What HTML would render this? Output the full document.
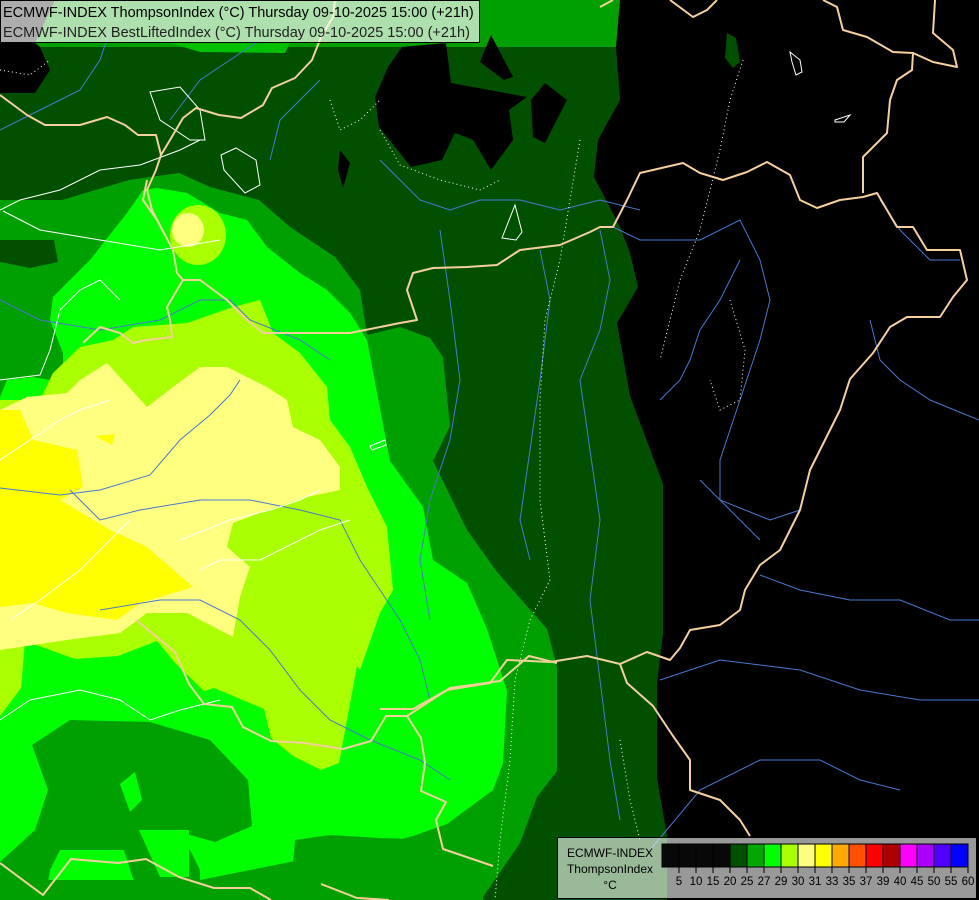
<!DOCTYPE html>
<html><head><meta charset="utf-8"><style>
html,body{margin:0;padding:0;background:#000;}
svg{display:block;}
text{font-family:"Liberation Sans",sans-serif;}
</style></head><body>
<svg width="979" height="900" viewBox="0 0 979 900" xmlns="http://www.w3.org/2000/svg">
<rect width="979" height="900" fill="#005000"/>
<polygon fill="#00a000" points="0,0 620,0 616,47 0,47"/>
<polygon fill="#00c000" points="170,43 290,43 285,53 200,52"/>
<polygon fill="#000" points="620,0 979,0 979,900 667,900 667,836 657,778 657,683 663,633 663,484 630,396 617,323 638,287 630,253 620,227 594,177 598,140 620,100 616,47"/>
<polygon fill="#005000" points="727,33 736,38 740,62 733,68 725,58"/>
<polygon fill="#000" points="0,0 55,0 35,43 40,47 50,70 35,93 0,93"/>
<polygon fill="#000" points="402,47 446,43 451,83 527,97 509,110 513,140 491,170 473,140 455,133 442,160 411,167 379,127 375,97 388,67"/>
<polygon fill="#000" points="491,35 513,77 504,80 480,62"/>
<polygon fill="#000" points="545,83 567,100 545,143 533,137 531,100"/>
<polygon fill="#000" points="340,150 350,163 343,188 338,170"/>
<polygon fill="#00a000" points="0,200 62,200 129,180 179,173 210,187 259,200 290,227 335,257 360,290 367,335 400,327 430,338 443,357 450,426 433,461 467,530 497,572 547,629 557,667 557,771 537,797 520,843 483,897 483,900 0,900"/>
<polygon fill="#005000" points="0,240 54,240 58,262 30,268 0,262"/>
<polygon fill="#00ff00" points="0,397 7,380 33,377 50,380 63,377 63,353 50,320 53,297 90,260 127,213 143,190 157,188 187,193 220,213 247,220 267,247 300,273 327,290 350,313 367,340 390,461 423,507 433,560 467,583 487,629 507,691 503,763 493,790 447,824 413,836 360,850 300,860 200,880 0,880"/>
<polygon fill="#00a000" points="32,745 70,720 150,722 210,740 248,780 252,826 215,842 190,835 140,838 130,850 60,850 50,870 45,900 0,900 0,862 35,830 48,790"/>
<polygon fill="#00a000" points="120,838 142,832 185,840 200,870 200,900 140,900"/>
<polygon fill="#00ff00" points="139,830 189,830 189,877 160,877"/>
<polygon fill="#00ff00" points="120,784 135,772 142,800 130,812"/>
<polygon fill="#00a000" points="290,900 295,840 330,835 380,838 440,840 470,822 490,815 483,900"/>
<polygon fill="#00a000" points="0,480 18,470 0,500"/>
<polygon fill="#aaff00" points="0,400 40,400 53,373 80,347 113,340 133,327 187,323 233,307 260,300 273,333 300,353 327,387 330,420 350,447 367,487 387,527 393,590 380,613 360,670 357,666 339,763 321,770 293,756 271,738 264,709 214,688 204,691 175,663 157,641 118,656 75,659 25,641 21,688 0,716"/>
<ellipse cx="198" cy="235" rx="28" ry="30" fill="#aaff00"/>
<ellipse cx="188" cy="230" rx="16" ry="17" fill="#ffff80"/>
<polygon fill="#ffff80" points="0,410 27,397 67,393 80,380 107,363 147,407 173,387 200,367 227,367 267,387 287,400 293,427 320,440 340,467 340,490 307,497 267,510 233,523 227,547 250,567 240,597 233,637 187,613 147,613 120,633 67,640 0,650"/>
<polygon fill="#ffff00" points="0,410 20,410 33,440 77,450 83,487 60,500 110,530 147,547 193,587 140,603 117,620 67,613 33,603 0,607"/>
<polygon fill="#ffff00" points="95,436 115,434 112,445"/>
<g fill="none" stroke="#4a78d0" stroke-width="1">
<polyline points="0,300 40,320 100,330 160,320 200,300 230,300 250,320 300,340 330,360"/>
<polyline points="0,488 60,495 100,490 150,475 180,440 210,415 230,395 240,380"/>
<polyline points="70,490 100,520 140,510 200,500 250,500 300,510 340,520 360,560 380,590 400,620 420,660 430,700"/>
<polyline points="100,610 160,600 200,600 240,620 270,650 300,690 330,720 370,740 420,760 450,780"/>
<polyline points="380,160 400,180 420,200 450,210 480,200 520,200 560,210 600,200 640,210"/>
<polyline points="440,230 450,300 460,380 450,440 430,500 420,560 430,620"/>
<polyline points="540,250 550,300 540,380 530,450 520,520 530,560"/>
<polyline points="600,230 610,280 600,330 580,380 590,450 600,520 590,600 600,680 610,760 620,820"/>
<polyline points="613,227 640,240 700,240 740,220 760,260 770,300 760,340 740,400 720,460 720,500 740,520 760,540"/>
<polyline points="660,400 680,380 690,360 700,330 720,300 740,260"/>
<polyline points="700,480 720,500 770,520 800,510"/>
<polyline points="760,575 800,590 850,600 900,600 950,620 979,620"/>
<polyline points="650,850 700,790 760,760 820,760 860,780 900,790"/>
<polyline points="660,680 720,660 800,670 860,690 920,700 979,700"/>
<polyline points="870,320 880,360 900,380 930,400 979,420"/>
<polyline points="880,200 900,230 930,260 960,260"/>
<polyline points="0,130 40,110 80,90 100,60 110,30"/>
<polyline points="170,120 200,80 230,60 260,40"/>
<polyline points="270,160 280,120 300,100 320,80"/>
</g>
<g fill="none" stroke="#fff" stroke-width="1">
<polyline points="0,210 20,200 60,190 100,170 140,165 180,150 200,140"/>
<polyline points="3,211 40,230 100,240 160,250 220,240"/>
<polygon points="150,92 180,87 200,110 205,140 190,140 160,120"/>
<polygon points="221,155 236,148 256,160 260,185 245,193 224,170"/>
<polyline points="0,380 40,375 50,350 60,310 80,290 100,280 120,300"/>
<polyline points="0,460 30,440 60,420 80,410 110,400"/>
<polyline points="10,620 40,600 80,570 110,540 130,520"/>
<polyline points="0,720 30,700 80,690 120,700 150,720 180,710 220,700"/>
<polyline points="180,540 230,520 270,510 300,500 320,490"/>
<polyline points="200,570 220,560 260,560 300,540 320,530 350,520"/>
<polygon points="502,238 515,205 522,232 516,240"/>
<polygon points="790,52 800,60 802,72 796,75 792,62"/>
<polygon points="835,120 850,115 844,122 835,122"/>
<polygon points="370,446 385,440 386,445 372,450"/>
</g>
<g fill="none" stroke="#fff" stroke-width="1" stroke-dasharray="1,3">
<polyline points="580,140 570,200 560,260 545,320 540,400 540,500 550,580 530,620 515,680 510,760 500,840 495,900"/>
<polyline points="330,100 340,130 360,120 380,100"/>
<polyline points="380,130 400,165 440,180 480,190 500,180"/>
<polyline points="743,60 730,100 720,150 700,230 680,280 660,360"/>
<polyline points="730,300 745,350 740,400 720,410 710,380"/>
<polyline points="620,740 630,800 640,840"/>
<polyline points="0,70 30,75 50,60"/>
</g>
<g fill="none" stroke="#f5cf9c" stroke-width="2" stroke-linejoin="round">
<polyline points="0,95 27,115 45,125 80,125 107,117 125,125 138,135 156,135 161,155 156,170 147,190 152,210 165,235"/>
<polyline points="161,155 170,140 183,118 196,108 219,115 241,118 263,105 272,88 295,78 312,60 321,37 333,17 335,0"/>
<polyline points="147,180 143,200 157,220 173,250 177,273 183,280 177,290 167,307 170,320 172,337 147,340 133,343 120,333 100,327 83,343"/>
<polyline points="183,280 200,280 227,300 247,320 263,333 300,333 350,333 400,323 417,320 407,290 413,273 433,268 467,267 497,265 520,250 560,245 590,232 600,227 613,227 627,200 640,173 683,163 700,173 723,180 747,172 767,162 790,175 800,200 817,208 840,200 863,197 877,193 887,210 897,227 913,227 927,250 960,250 967,280 953,297 940,317 907,317 890,327 873,353 850,379 840,410 825,440 810,470 800,510 780,550 760,565 745,590 740,610 720,625 690,630 680,648 670,660 647,652 620,664 587,656 550,662 507,660 490,683 447,690 413,709 380,709"/>
<polyline points="863,193 863,157 887,133 890,100 897,80 912,70 913,53 933,62 957,67 953,50 933,33 935,0"/>
<polyline points="913,53 893,52 867,37 843,30 837,7 823,0"/>
<polyline points="670,0 693,17 707,10 717,0"/>
<polyline points="600,7 613,0"/>
<polyline points="620,664 627,683 653,706 673,736 690,760 690,790 720,800 740,820 750,836"/>
<polyline points="136,620 175,652 189,684 204,704 232,707 243,727 271,741 304,743 343,749 371,741 386,716 407,716 421,738 425,763 421,791 446,802 436,820 443,849 493,866"/>
<polyline points="407,716 450,688 500,681 529,656 557,663"/>
<polyline points="0,863 43,895 71,859 118,863 146,859 179,877 214,888 250,888 271,900"/>
<polyline points="321,884 357,898 389,900"/>
</g>
<rect x="0.5" y="0.5" width="479" height="42" fill="#fff" fill-opacity="0.68" stroke="#000" stroke-width="1"/>
<text x="3" y="17" font-size="14.5" fill="#000">ECMWF-INDEX ThompsonIndex (°C) Thursday 09-10-2025 15:00 (+21h)</text>
<text x="3" y="37" font-size="14.5" fill="#222">ECMWF-INDEX BestLiftedIndex (°C) Thursday 09-10-2025 15:00 (+21h)</text>
<rect x="557.5" y="837.5" width="419" height="61" fill="#fff" fill-opacity="0.6" stroke="#000" stroke-width="1"/>
<text x="610" y="857" font-size="12" text-anchor="middle" fill="#000">ECMWF-INDEX</text>
<text x="610" y="873" font-size="12" text-anchor="middle" fill="#000">ThompsonIndex</text>
<text x="610" y="889" font-size="12" text-anchor="middle" fill="#000">°C</text>
<g stroke="#000" stroke-width="1">
<rect x="662" y="844" width="17" height="23" fill="#080808"/>
<rect x="679" y="844" width="17" height="23" fill="#080808"/>
<rect x="696" y="844" width="17" height="23" fill="#080808"/>
<rect x="713" y="844" width="17" height="23" fill="#080808"/>
<rect x="730" y="844" width="17" height="23" fill="#005000"/>
<rect x="747" y="844" width="17" height="23" fill="#00a800"/>
<rect x="764" y="844" width="17" height="23" fill="#00ff00"/>
<rect x="781" y="844" width="17" height="23" fill="#aaff00"/>
<rect x="798" y="844" width="17" height="23" fill="#ffff80"/>
<rect x="815" y="844" width="17" height="23" fill="#ffff00"/>
<rect x="832" y="844" width="17" height="23" fill="#ffaa00"/>
<rect x="849" y="844" width="17" height="23" fill="#ff5000"/>
<rect x="866" y="844" width="17" height="23" fill="#ff0000"/>
<rect x="883" y="844" width="17" height="23" fill="#aa0000"/>
<rect x="900" y="844" width="17" height="23" fill="#ff00ff"/>
<rect x="917" y="844" width="17" height="23" fill="#aa00ff"/>
<rect x="934" y="844" width="17" height="23" fill="#5000ff"/>
<rect x="951" y="844" width="17" height="23" fill="#0000ff"/>
<path d="M679 867v6M696 867v6M713 867v6M730 867v6M747 867v6M764 867v6M781 867v6M798 867v6M815 867v6M832 867v6M849 867v6M866 867v6M883 867v6M900 867v6M917 867v6M934 867v6M951 867v6M968 867v6"/>
</g>
<g font-size="11.5" text-anchor="middle" fill="#000">
<text x="679" y="885">5</text><text x="696" y="885">10</text><text x="713" y="885">15</text><text x="730" y="885">20</text><text x="747" y="885">25</text><text x="764" y="885">27</text><text x="781" y="885">29</text><text x="798" y="885">30</text><text x="815" y="885">31</text><text x="832" y="885">33</text><text x="849" y="885">35</text><text x="866" y="885">37</text><text x="883" y="885">39</text><text x="900" y="885">40</text><text x="917" y="885">45</text><text x="934" y="885">50</text><text x="951" y="885">55</text><text x="968" y="885">60</text>
</g>
</svg>
</body></html>
